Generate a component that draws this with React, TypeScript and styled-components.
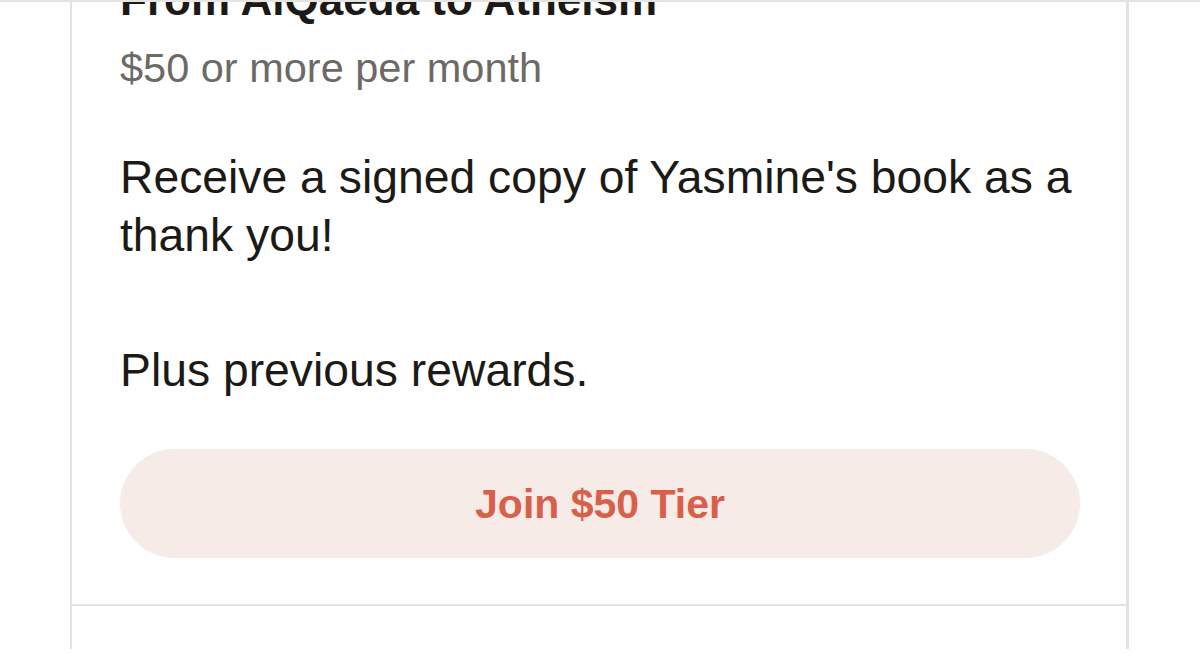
import React from 'react';
import styled, { createGlobalStyle } from 'styled-components';

const GlobalStyle = createGlobalStyle`
  html, body {
    margin: 0;
    padding: 0;
    background: #ffffff;
  }
  body {
    font-family: "Liberation Sans", Arial, sans-serif;
    color: #1c1a17;
    overflow: hidden;
  }
`;

const HeaderEdge = styled.div`
  position: fixed;
  top: 0;
  left: 0;
  right: 0;
  height: 2px;
  background: #e6e4e1;
  z-index: 2;
`;

const Page = styled.div`
  padding: 0 71px 0 70px;
  height: 671px;
  box-sizing: border-box;
`;

const Card = styled.div`
  border-left: 2px solid #e4e2df;
  border-right: 3px solid #e4e2df;
  height: 100%;
  box-sizing: border-box;
`;

const Tier = styled.section`
  padding: 0 46px 46px 48px;
  border-bottom: 2px solid #e4e2df;
`;

const Title = styled.h3`
  margin: -22px 0 0;
  font-size: 44px;
  line-height: 44px;
  font-weight: 700;
  color: #1c1a17;
  white-space: nowrap;
`;

const Price = styled.div`
  margin-top: 21px;
  font-size: 41.5px;
  line-height: 50px;
  color: #6d6a66;
`;

const Text = styled.p<{ $gap: number }>`
  margin: ${(p) => p.$gap}px 0 0;
  font-size: 46.3px;
  line-height: 58px;
  color: #1c1a17;
`;

const JoinButton = styled.button`
  display: flex;
  align-items: center;
  justify-content: center;
  width: 100%;
  height: 109px;
  margin-top: 50px;
  padding-top: 3px;
  border: none;
  border-radius: 55px;
  background: #f7ebe8;
  color: #d8604b;
  font-family: "Liberation Sans", Arial, sans-serif;
  font-size: 41px;
  font-weight: 700;
  cursor: pointer;
`;

export default function App() {
  return (
    <>
      <GlobalStyle />
      <HeaderEdge />
      <Page>
        <Card>
          <Tier>
            <Title>From AlQaeda to Atheism</Title>
            <Price>$50 or more per month</Price>
            <Text $gap={55}>Receive a signed copy of Yasmine's book as a thank you!</Text>
            <Text $gap={77}>Plus previous rewards.</Text>
            <JoinButton>Join $50 Tier</JoinButton>
          </Tier>
        </Card>
      </Page>
    </>
  );
}
